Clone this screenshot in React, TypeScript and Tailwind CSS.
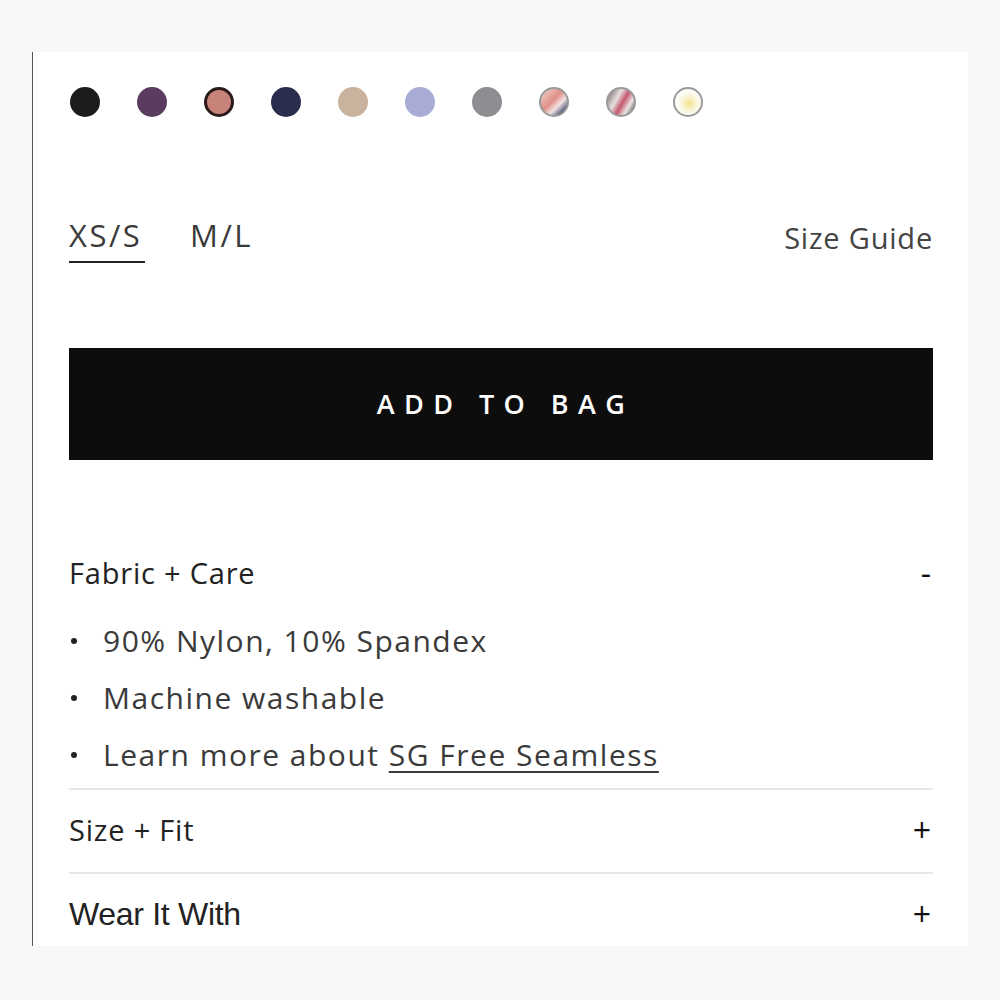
const swatches = [
  { bg: "bg-[#1c1c1c]" },
  { bg: "bg-[#5a3d5e]" },
  { bg: "bg-[#c7837a]", selected: true },
  { bg: "bg-[#2b2d4f]" },
  { bg: "bg-[#c9b29e]" },
  { bg: "bg-[#a9acd4]" },
  { bg: "bg-[#8e8d91]" },
  { bg: "bg-[linear-gradient(135deg,#f1d7d2_0%,#e08f86_45%,#f3e3e1_65%,#5a5f7d_85%)]", ring: true },
  { bg: "bg-[linear-gradient(120deg,#6f6060_0%,#e5e0de_35%,#c5586f_55%,#ece5e5_75%,#3d3838_100%)]", ring: true },
  { bg: "bg-[radial-gradient(circle_at_55%_55%,#f1e58f_0%,#fbf8e6_45%,#ffffff_70%)]", ring: true },
]

function Swatch({ bg, selected, ring }: { bg: string; selected?: boolean; ring?: boolean }) {
  return (
    <span
      className={`block h-[30px] w-[30px] rounded-full ${bg} ${
        selected ? "border-[3px] border-[#2a1a1a]" : ring ? "border-2 border-[#9a9a9a]" : ""
      }`}
    />
  )
}

function AccordionRow({ title, open, narrow }: { title: string; open?: boolean; narrow?: boolean }) {
  return (
    <div className="flex items-center justify-between leading-[36px]">
      <span
        className={
          narrow
            ? "font-['Liberation_Sans_Narrow',sans-serif] text-[32px] tracking-[-0.3px] text-[#222]"
            : "text-[29px] tracking-[0.8px] text-[#222]"
        }
      >
        {title}
      </span>
      <span className="mr-[2px] text-[32px] leading-none text-[#111]">{open ? "-" : "+"}</span>
    </div>
  )
}

function Bullet({ children }: { children: React.ReactNode }) {
  return (
    <li className="flex items-center">
      <span className="ml-[2px] mr-[26px] h-[6px] w-[6px] rounded-full bg-[#222]" />
      {children}
    </li>
  )
}

export default function App() {
  return (
    <div className="min-h-[1000px] bg-[#f8f7f7] pt-[52px] font-['Open_Sans',sans-serif]">
      <div className="ml-[32px] flex h-[894px] w-[936px] flex-col border-l border-[#555] bg-white pl-[36px] pr-[35px]">
        {/* colour swatches */}
        <div className="mt-[35px] flex gap-[37px] pl-[1px]">
          {swatches.map((s, i) => (
            <Swatch key={i} {...s} />
          ))}
        </div>

        {/* sizes */}
        <div className="mt-[103px] flex items-start justify-between">
          <div className="flex gap-[45px] text-[31px] leading-none tracking-[2.5px] text-[#3a3a3a]">
            <div className="flex flex-col">
              <span>XS/S</span>
              <span className="mt-[10px] h-[2px] w-[76px] bg-[#222]" />
            </div>
            <span>M/L</span>
          </div>
          <span className="mt-[3px] text-[29px] leading-none tracking-[0.8px] text-[#444]">Size Guide</span>
        </div>

        {/* add to bag */}
        <button className="mt-[85px] flex h-[112px] w-full items-center justify-center bg-[#0d0d0d] pl-[9px] text-[27px] font-semibold tracking-[0.35em] text-white">
          ADD TO BAG
        </button>

        {/* fabric + care */}
        <div className="mt-[95px]">
          <AccordionRow title="Fabric + Care" open />
          <ul className="mt-[30px] flex flex-col gap-[18px] text-[30px] leading-[39px] tracking-[1.5px] text-[#3a3a3a]">
            <Bullet>90% Nylon, 10% Spandex</Bullet>
            <Bullet>Machine washable</Bullet>
            <Bullet>
              <span>
                Learn more about{" "}
                <a className="underline decoration-[2px] underline-offset-[5px]">SG Free Seamless</a>
              </span>
            </Bullet>
          </ul>
        </div>

        <div className="mt-[14px] border-t-2 border-[#e6e6e6] pb-[24px] pt-[22px]">
          <AccordionRow title="Size + Fit" />
        </div>
        <div className="border-t-2 border-[#e6e6e6] pt-[22px]">
          <AccordionRow title="Wear It With" narrow />
        </div>
      </div>
    </div>
  )
}
